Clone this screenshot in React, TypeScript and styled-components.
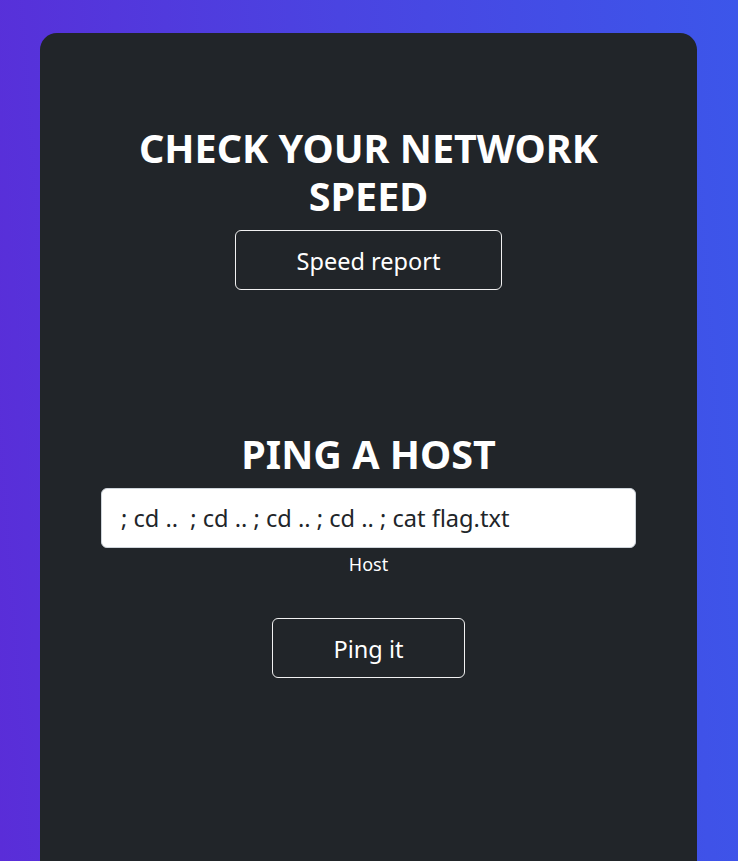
import React from "react";
import styled, { createGlobalStyle } from "styled-components";

const Global = createGlobalStyle`
  html, body {
    margin: 0;
    padding: 0;
    height: 100%;
    overflow: hidden;
  }
  body {
    background: linear-gradient(86deg, #5a2dd8 0%, #4a44e1 50%, #3c56ea 100%);
    font-family: "Noto Sans", "Open Sans", sans-serif;
    color: #fff;
  }
`;

const Page = styled.div`
  min-height: 100vh;
  padding-top: 33px;
  box-sizing: border-box;
`;

const Card = styled.main`
  width: 657px;
  min-height: 900px;
  margin: 0 0 0 40px;
  background: #212529;
  border-radius: 17px;
  padding: 91px 61px 0;
  box-sizing: border-box;
  display: flex;
  flex-direction: column;
  align-items: center;
`;

const Section = styled.section<{ $gap?: number }>`
  width: 100%;
  display: flex;
  flex-direction: column;
  align-items: center;
  margin-top: ${(p) => p.$gap ?? 0}px;
`;

const Heading = styled.h1`
  margin: 0 0 10px;
  font-size: 39.5px;
  line-height: 48px;
  font-weight: 700;
  text-align: center;
  color: #fff;
  max-width: 480px;
`;

const OutlineButton = styled.button<{ $w: number }>`
  width: ${(p) => p.$w}px;
  height: 60px;
  padding: 2px 0 0;
  background: transparent;
  border: 1px solid #f1f1f1;
  border-radius: 6px;
  color: #fff;
  font-family: inherit;
  font-size: 23.5px;
  cursor: pointer;
`;

const HostInput = styled.input`
  width: 100%;
  height: 60px;
  box-sizing: border-box;
  background: #fff;
  border: 1px solid #ced4da;
  border-radius: 6px;
  padding: 0 19px;
  font-family: inherit;
  font-size: 23.6px;
  color: #212529;
  outline: none;
`;

const Label = styled.label`
  margin-top: 4px;
  font-size: 18px;
  line-height: 24px;
  color: #fff;
`;

const PingButtonWrap = styled.div`
  margin-top: 42px;
`;

export default function App() {
  return (
    <>
      <Global />
      <Page>
        <Card>
          <Section>
            <Heading>CHECK YOUR NETWORK SPEED</Heading>
            <OutlineButton $w={267}>Speed report</OutlineButton>
          </Section>
          <Section $gap={140}>
            <Heading>PING A HOST</Heading>
            <HostInput
              id="host"
              defaultValue="; cd ..  ; cd .. ; cd .. ; cd .. ; cat flag.txt"
            />
            <Label htmlFor="host">Host</Label>
            <PingButtonWrap>
              <OutlineButton $w={193}>Ping it</OutlineButton>
            </PingButtonWrap>
          </Section>
        </Card>
      </Page>
    </>
  );
}
